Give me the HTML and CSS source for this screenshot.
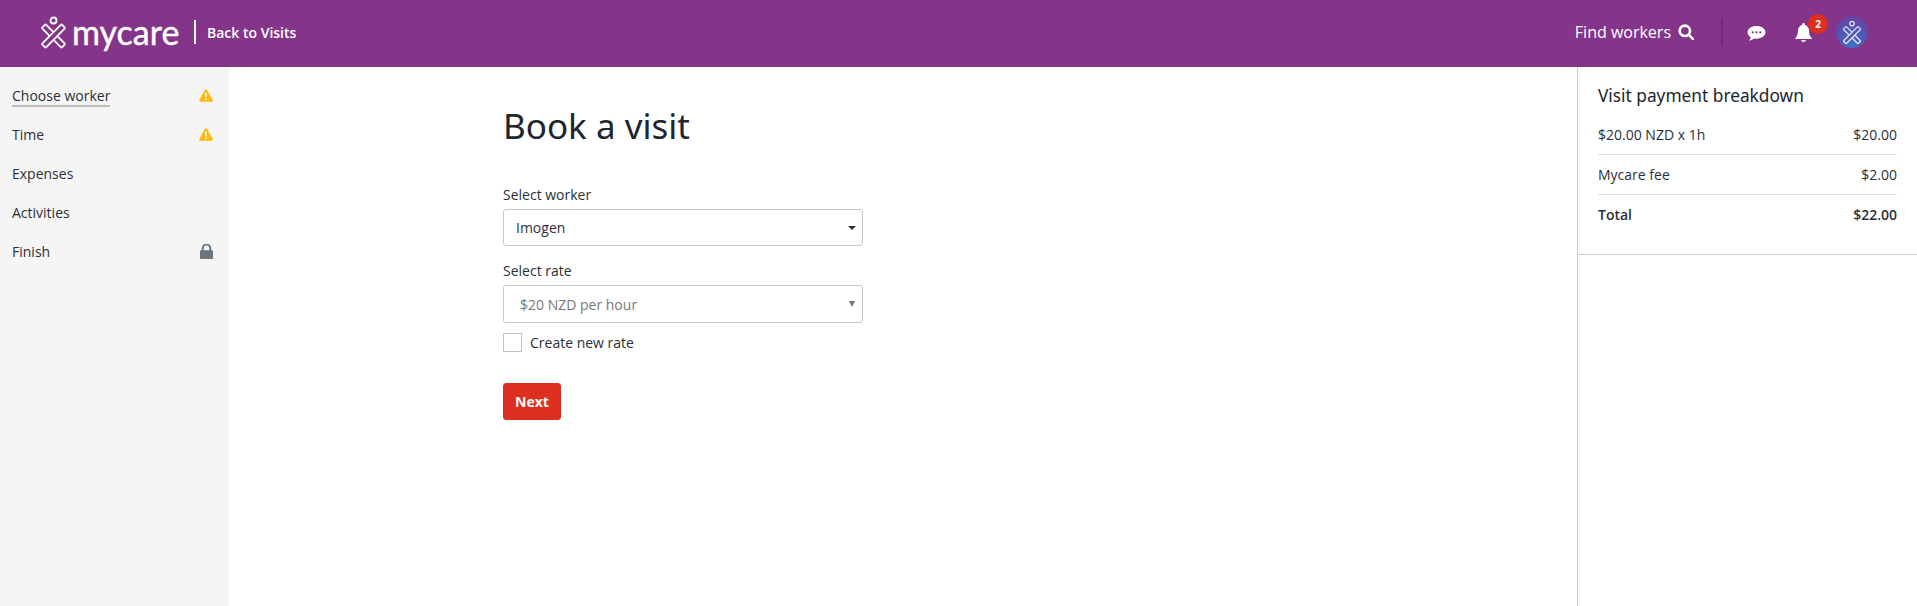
FILE: index.html
```html
<!DOCTYPE html>
<html lang="en">
<head>
  <meta charset="UTF-8">
  <meta name="viewport" content="width=device-width, initial-scale=1.0">
  <title>Book a visit</title>
  <link rel="stylesheet" href="styles.css">
</head>
<body>
  <header class="topbar">
    <a href="#" class="brand">
      <svg class="logo" viewBox="0 0 27 32" fill="none" stroke="#fff" stroke-width="1.8">
        <circle cx="13.5" cy="4" r="3"/>
        <rect x="10.8" y="5.5" width="5.4" height="28" rx="1" transform="rotate(-45 13.5 19.5)"/>
        <rect x="10.8" y="5.5" width="5.4" height="28" rx="1" fill="#84358a" transform="rotate(45 13.5 19.5)"/>
      </svg>
      <span class="wordmark">mycare</span>
    </a>
    <a href="#" class="back-link">Back to Visits</a>

    <div class="topbar-right">
      <a href="#" class="find-workers">
        Find workers
        <svg class="search-icon" viewBox="0 0 16 16" fill="none" stroke="#fff" stroke-width="2.6">
          <circle cx="6.8" cy="6.8" r="5.2"/>
          <path d="M10.6 10.6l4.2 4.2" stroke-linecap="round"/>
        </svg>
      </a>
      <span class="topbar-divider"></span>
      <svg class="chat-icon" viewBox="0 0 18 16">
        <path fill="#fff" d="M9 1C4.2 1 .5 3.6.5 6.9c0 1.9 1.2 3.5 3.1 4.6-.2 1.2-.9 2.3-1.8 3.2 1.8-.1 3.6-.8 4.9-2 .7.1 1.5.2 2.3.2 4.8 0 8.5-2.7 8.5-6S13.800 1 9 1z"/>
        <g fill="#84358a"><circle cx="5.400" cy="6.900" r="1.100"/><circle cx="9" cy="6.900" r="1.100"/><circle cx="12.600" cy="6.900" r="1.100"/></g>
      </svg>
      <div class="bell">
        <svg class="bell-icon" viewBox="0 0 16 18">
          <path fill="#fff" d="M8 0a1.300 1.300 0 0 0-1.300 1.300v.5C4.300 2.400 2.800 4.500 2.800 7c0 4-1 5.600-2.500 7.200-.3.400-.1 1 .5 1h14.400c.6 0 .8-.6.500-1C14.200 12.600 13.200 11 13.200 7c0-2.500-1.500-4.600-3.900-5.200v-.5A1.300 1.300 0 0 0 8 0zM5.800 16a2.200 2 0 0 0 4.400 0z"/>
        </svg>
        <span class="badge">2</span>
      </div>
      <div class="avatar">
        <svg viewBox="0 0 27 32" fill="none" stroke="#e6e0f2" stroke-width="1.700">
          <circle cx="13.500" cy="4" r="3"/>
          <rect x="10.800" y="5.500" width="5.400" height="28" rx="1" transform="rotate(-45 13.500 19.500)"/>
          <rect x="10.800" y="5.500" width="5.400" height="28" rx="1" fill="#4a5cb4" transform="rotate(45 13.500 19.500)"/>
        </svg>
      </div>
    </div>
  </header>

  <div class="layout">
    <nav class="steps">
      <a href="#" class="step"><span class="step-label current">Choose worker</span>
        <svg class="step-icon" viewBox="0 0 14 13"><path fill="#fdb813" d="M6 .8a1.150 1.150 0 0 1 2 0l5.700 10.300a1.150 1.150 0 0 1-1 1.700H1.300a1.150 1.150 0 0 1-1-1.700z"/><path fill="#fff" d="M6.100 3.800h1.800l-.3 4.700H6.400zM6.100 9.400h1.800v1.700H6.100z"/></svg>
      </a>
      <a href="#" class="step"><span class="step-label">Time</span>
        <svg class="step-icon" viewBox="0 0 14 13"><path fill="#fdb813" d="M6 .8a1.150 1.150 0 0 1 2 0l5.700 10.300a1.150 1.150 0 0 1-1 1.700H1.300a1.150 1.150 0 0 1-1-1.700z"/><path fill="#fff" d="M6.100 3.800h1.800l-.3 4.700H6.400zM6.100 9.400h1.800v1.700H6.100z"/></svg>
      </a>
      <a href="#" class="step"><span class="step-label">Expenses</span></a>
      <a href="#" class="step"><span class="step-label">Activities</span></a>
      <a href="#" class="step"><span class="step-label">Finish</span>
        <svg class="step-icon lock" viewBox="0 0 13 15"><path fill="#6c757d" d="M3.700 6.300V4.200a2.800 2.800 0 0 1 5.600 0v2.100h2v-2a4.800 4.800 0 0 0-9.600 0v2zM1.200 6.200h10.600c.6 0 1.200.5 1.200 1.100v6.400c0 .7-.6 1.300-1.200 1.300H1.200C.6 15 0 14.400 0 13.700V7.300c0-.6.600-1.100 1.200-1.100z"/></svg>
      </a>
    </nav>

    <main class="content">
      <h1>Book a visit</h1>
      <form class="visit-form">
        <label class="field-label" for="worker">Select worker</label>
        <div class="select-wrap">
          <select id="worker" class="select"><option>Imogen</option></select>
        </div>
        <label class="field-label" for="rate">Select rate</label>
        <div class="select-wrap disabled">
          <select id="rate" class="select" disabled><option>$20 NZD per hour</option></select>
        </div>
        <label class="checkbox-row"><input type="checkbox" class="checkbox"> Create new rate</label>
        <button type="button" class="btn-next">Next</button>
      </form>
    </main>

    <aside class="breakdown">
      <div class="breakdown-card">
        <h3>Visit payment breakdown</h3>
        <div class="line"><span>$20.00 NZD x 1h</span><span>$20.00</span></div>
        <div class="line"><span>Mycare fee</span><span>$2.00</span></div>
        <div class="line total"><span>Total</span><span>$22.00</span></div>
      </div>
    </aside>
  </div>
</body>
</html>
```

FILE: styles.css
```css
* {
  margin: 0;
  padding: 0;
  box-sizing: border-box;
}

html, body {
  height: 100%;
}

body {
  display: flex;
  flex-direction: column;
  overflow: hidden;
  font-family: "Open Sans", Arial, sans-serif;
  font-size: 14px;
  color: #2b3038;
  background: #fff;
}

a {
  color: inherit;
  text-decoration: none;
}

/* top bar */
.topbar {
  display: flex;
  align-items: center;
  height: 67px;
  padding: 0 0 3px 40px;
  background: #84358a;
  color: #fff;
  flex-shrink: 0;
}

.brand {
  display: flex;
  align-items: center;
  gap: 5px;
  padding-right: 17px;
}

.logo {
  width: 27px;
  height: 33px;
  overflow: visible;
}

.wordmark {
  font-family: Lato, sans-serif;
  font-size: 34px;
  line-height: 34px;
  font-weight: 400;
  width: 105px;
  -webkit-text-stroke: 0.4px #fff;
}

.back-link {
  display: flex;
  align-items: center;
  height: 24px;
  padding-left: 11px;
  border-left: 2px solid #fff;
  font-weight: 600;
}

.topbar-right {
  display: flex;
  align-items: center;
  margin-left: auto;
  padding-right: 49px;
}

.find-workers {
  display: flex;
  align-items: center;
  gap: 7px;
  font-size: 16px;
}

.search-icon {
  width: 16px;
  height: 16px;
}

.topbar-divider {
  width: 2px;
  height: 28px;
  margin: 0 24px 0 27px;
  background: #6d2a76;
}

.chat-icon {
  width: 19px;
  height: 17px;
  margin-top: 2px;
}

.bell {
  position: relative;
  display: flex;
  margin-left: 29px;
}

.bell-icon {
  width: 17px;
  height: 19px;
}

.badge {
  position: absolute;
  top: -9px;
  left: 13px;
  width: 20px;
  height: 20px;
  border-radius: 50%;
  background: #dd2f20;
  font-size: 10px;
  font-weight: 700;
  line-height: 20px;
  text-align: center;
}

.avatar {
  display: flex;
  align-items: center;
  justify-content: center;
  width: 32px;
  height: 32px;
  margin-left: 24px;
  border-radius: 50%;
  background: radial-gradient(circle at 50% 85%, #3a72c6, #5a4fae 60%, #6b3f9c);
}

.avatar svg {
  width: 20px;
  height: 25px;
  overflow: visible;
}

/* three columns */
.layout {
  display: flex;
  flex: 1;
  min-height: 0;
}

.steps {
  width: 229px;
  padding-top: 9px;
  background: #f5f5f5;
  flex-shrink: 0;
}

.step {
  display: flex;
  align-items: center;
  justify-content: space-between;
  height: 39px;
  padding: 0 16px 0 12px;
}

.step-label.current {
  border-bottom: 2px solid #bdbdbd;
  line-height: 19px;
  margin-top: 2px;
}

.step-icon {
  width: 14px;
  height: 13px;
}

.lock {
  width: 13px;
  height: 15px;
}

.content {
  flex: 1;
  padding: 37px 0 0 274px;
}

h1 {
  font-family: "Noto Sans", sans-serif;
  font-size: 35px;
  font-weight: 400;
  line-height: 44px;
  color: #20262d;
  margin-bottom: 37px;
}

.visit-form {
  width: 360px;
}

.field-label {
  display: block;
  line-height: 19px;
  margin-bottom: 5px;
}

.select-wrap {
  position: relative;
  margin-bottom: 15px;
}

.select-wrap::after {
  content: "";
  position: absolute;
  top: 17px;
  right: 7px;
  border-top: 4px solid #2b3038;
  border-left: 4px solid transparent;
  border-right: 4px solid transparent;
}

.select-wrap.disabled {
  margin-bottom: 10px;
}

.select-wrap.disabled::after {
  top: 16px;
  right: 8px;
  border-top: 6px solid #777;
  border-left: 3px solid transparent;
  border-right: 3px solid transparent;
}

.select {
  display: block;
  width: 100%;
  height: 37px;
  padding-left: 12px;
  appearance: none;
  border: 1px solid #c8c8c8;
  border-radius: 3px;
  background: #fff;
  font-family: inherit;
  font-size: 14px;
  color: #2b3038;
}

.select:disabled {
  height: 38px;
  padding-left: 16px;
  color: #777;
  opacity: 1;
}

.checkbox-row {
  display: flex;
  align-items: center;
  gap: 8px;
}

.checkbox {
  width: 19px;
  height: 19px;
  appearance: none;
  border: 1px solid #c4c4c4;
  background: #fff;
}

.btn-next {
  display: block;
  width: 58px;
  height: 37px;
  margin-top: 31px;
  border: 1px solid #d42d1e;
  border-radius: 3px;
  background: #de3020;
  color: #fff;
  font-family: inherit;
  font-size: 14px;
  font-weight: 700;
}

/* payment panel */
.breakdown {
  width: 340px;
  border-left: 1px solid #ccc;
  flex-shrink: 0;
}

.breakdown-card {
  height: 188px;
  padding: 17px 20px 0 20px;
  border-bottom: 1px solid #ccc;
}

.breakdown h3 {
  font-family: "Noto Sans", sans-serif;
  font-size: 17.3px;
  font-weight: 400;
  line-height: 24px;
  color: #20262d;
  margin-bottom: 7px;
}

.line {
  display: flex;
  justify-content: space-between;
  height: 40px;
  padding-top: 10px;
  line-height: 19px;
  border-bottom: 1px solid #ddd;
}

.line.total {
  border-bottom: 0;
  font-weight: 600;
}
```
